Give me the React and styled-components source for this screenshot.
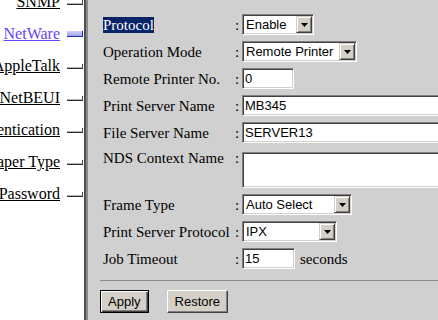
import React from "react";
import styled, { createGlobalStyle } from "styled-components";

const Global = createGlobalStyle`
  html, body { margin: 0; padding: 0; overflow: hidden; }
  body { background: #d0d0d0; }
`;

const Page = styled.div`
  display: flex;
  width: 438px;
  height: 320px;
  overflow: hidden;
`;

const Sidebar = styled.nav`
  flex: 0 0 84px;
  background: #ffffff;
  border-right: 2px solid #505050;
  overflow: hidden;
`;

const NavList = styled.div`
  display: flex;
  flex-direction: column;
  margin-top: -14px;
`;

const NavItem = styled.div`
  display: flex;
  justify-content: flex-end;
  align-items: flex-start;
  height: 32px;
  padding-right: 1px;
  gap: 7px;
`;

const NavLink = styled.a`
  margin-top: 7px;
  font-family: "Liberation Serif", "Times New Roman", serif;
  font-size: 16px;
  line-height: 18px;
  white-space: nowrap;
  color: ${(p) => (p.$active ? "#6644ff" : "#000000")};
  text-decoration: underline;
  cursor: pointer;
`;

const Connector = styled.span`
  flex: 0 0 16px;
  box-sizing: border-box;
  margin-top: ${(p) => (p.$active ? "13px" : "14px")};
  height: ${(p) => (p.$active ? "6px" : "5px")};
  border-right: 1px solid ${(p) => (p.$active ? "#2828a0" : "#505050")};
  border-bottom: 1px solid ${(p) => (p.$active ? "#2828a0" : "#303030")};
  background: ${(p) =>
    p.$active ? "linear-gradient(#d0d4ff, #9ea4f0)" : "transparent"};
  box-shadow: ${(p) => (p.$active ? "none" : "inset 0 -1px 0 #b0b0b0")};
`;

const Main = styled.main`
  flex: 1;
  min-width: 0;
  background: #d0d0d0;
  border-left: 2px solid #8c8c8c;
  padding: 14px 0 0 12px;
  overflow: hidden;
`;

const Form = styled.div`
  display: flex;
  flex-direction: column;
  gap: 6px;
  margin-left: 3px;
`;

const Row = styled.div`
  display: grid;
  grid-template-columns: 132px 7px auto;
  align-items: ${(p) => (p.$top ? "start" : "center")};
  white-space: nowrap;
`;

const Label = styled.span`
  font-family: "Liberation Serif", "Times New Roman", serif;
  font-size: 15px;
  line-height: 18px;
  color: #000;
`;

const Selected = styled.span`
  background: #0a246a;
  color: #ffffff;
`;

const Colon = styled(Label)``;

const Field = styled.div`
  display: flex;
  align-items: center;
  margin-top: ${(p) => p.$offset || 0}px;
`;

const sunken = `
  box-sizing: border-box;
  border: 1px solid;
  border-color: #808080 #ffffff #ffffff #808080;
  box-shadow: inset 1px 1px 0 #404040, inset -1px -1px 0 #d4d0c8;
  background: #ffffff;
`;

const SelectBox = styled.div`
  ${sunken}
  display: flex;
  width: ${(p) => p.$w}px;
  height: 21px;
  padding: 1px;
`;

const SelectText = styled.span`
  flex: 1;
  padding-left: 2px;
  font-family: "Liberation Sans", Arial, sans-serif;
  font-size: 13px;
  line-height: 17px;
  color: #000;
  overflow: hidden;
`;

const ArrowButton = styled.span`
  flex: 0 0 16px;
  height: 17px;
  box-sizing: border-box;
  display: flex;
  align-items: center;
  justify-content: center;
  background: #d4d0c8;
  border: 1px solid;
  border-color: #d4d0c8 #404040 #404040 #d4d0c8;
  box-shadow: inset 1px 1px 0 #ffffff, inset -1px -1px 0 #808080;
`;

const TextInput = styled.input`
  ${sunken}
  width: ${(p) => p.$w}px;
  height: 21px;
  margin: 0;
  padding: 0 2px;
  font-family: "Liberation Sans", Arial, sans-serif;
  font-size: 13px;
  color: #000;
  outline: none;
`;

const TextArea = styled.textarea`
  ${sunken}
  width: 250px;
  height: 36px;
  margin: 0;
  padding: 2px;
  resize: none;
  font-family: "Liberation Sans", Arial, sans-serif;
  font-size: 13px;
  outline: none;
`;

const Unit = styled(Label)`
  margin-left: 5px;
`;

const Divider = styled.hr`
  margin: 11px 0 0 0;
  border: 0;
  height: 1px;
  background: #8c8c8c;
`;

const ButtonBar = styled.div`
  display: flex;
  gap: 18px;
  margin-top: 9px;
`;

const Button = styled.button`
  box-sizing: border-box;
  height: 23px;
  margin: 0;
  padding: 0 7px;
  font-family: "Liberation Sans", Arial, sans-serif;
  font-size: 13px;
  color: #000;
  background: #d4d0c8;
  border: 1px solid;
  border-color: ${(p) =>
    p.$default ? "#000000" : "#ffffff #404040 #404040 #ffffff"};
  box-shadow: ${(p) =>
    p.$default
      ? "inset 1px 1px 0 #ffffff, inset -1px -1px 0 #404040, inset -2px -2px 0 #808080"
      : "inset -1px -1px 0 #808080, inset 1px 1px 0 #d4d0c8"};
  cursor: pointer;
`;

const Arrow = () => (
  <svg width="7" height="4" viewBox="0 0 7 4">
    <polygon points="0,0 7,0 3.5,4" fill="#000" />
  </svg>
);

const Select = ({ w, value }) => (
  <SelectBox $w={w}>
    <SelectText>{value}</SelectText>
    <ArrowButton>
      <Arrow />
    </ArrowButton>
  </SelectBox>
);

const navItems = [
  "SNMP",
  "NetWare",
  "AppleTalk",
  "NetBEUI",
  "Authentication",
  "Paper Type",
  "Password",
];

export default function App() {
  return (
    <>
      <Global />
      <Page>
        <Sidebar>
          <NavList>
            {navItems.map((n) => {
              const active = n === "NetWare";
              return (
                <NavItem key={n}>
                  <NavLink $active={active}>{n}</NavLink>
                  <Connector $active={active} />
                </NavItem>
              );
            })}
          </NavList>
        </Sidebar>
        <Main>
          <Form>
            <Row>
              <Label>
                <Selected>Protocol</Selected>
              </Label>
              <Colon>:</Colon>
              <Field>
                <Select w={72} value="Enable" />
              </Field>
            </Row>
            <Row>
              <Label>Operation Mode</Label>
              <Colon>:</Colon>
              <Field>
                <Select w={115} value="Remote Printer" />
              </Field>
            </Row>
            <Row>
              <Label>Remote Printer No.</Label>
              <Colon>:</Colon>
              <Field>
                <TextInput $w={52} value="0" readOnly />
              </Field>
            </Row>
            <Row>
              <Label>Print Server Name</Label>
              <Colon>:</Colon>
              <Field>
                <TextInput $w={250} value="MB345" readOnly />
              </Field>
            </Row>
            <Row>
              <Label>File Server Name</Label>
              <Colon>:</Colon>
              <Field>
                <TextInput $w={250} value="SERVER13" readOnly />
              </Field>
            </Row>
            <Row $top>
              <Label>NDS Context Name</Label>
              <Colon>:</Colon>
              <Field $offset={3}>
                <TextArea readOnly />
              </Field>
            </Row>
            <Row>
              <Label>Frame Type</Label>
              <Colon>:</Colon>
              <Field>
                <Select w={110} value="Auto Select" />
              </Field>
            </Row>
            <Row>
              <Label>Print Server Protocol</Label>
              <Colon>:</Colon>
              <Field>
                <Select w={95} value="IPX" />
              </Field>
            </Row>
            <Row>
              <Label>Job Timeout</Label>
              <Colon>:</Colon>
              <Field>
                <TextInput $w={53} value="15" readOnly />
                <Unit>seconds</Unit>
              </Field>
            </Row>
          </Form>
          <Divider />
          <ButtonBar>
            <Button $default>Apply</Button>
            <Button>Restore</Button>
          </ButtonBar>
        </Main>
      </Page>
    </>
  );
}
